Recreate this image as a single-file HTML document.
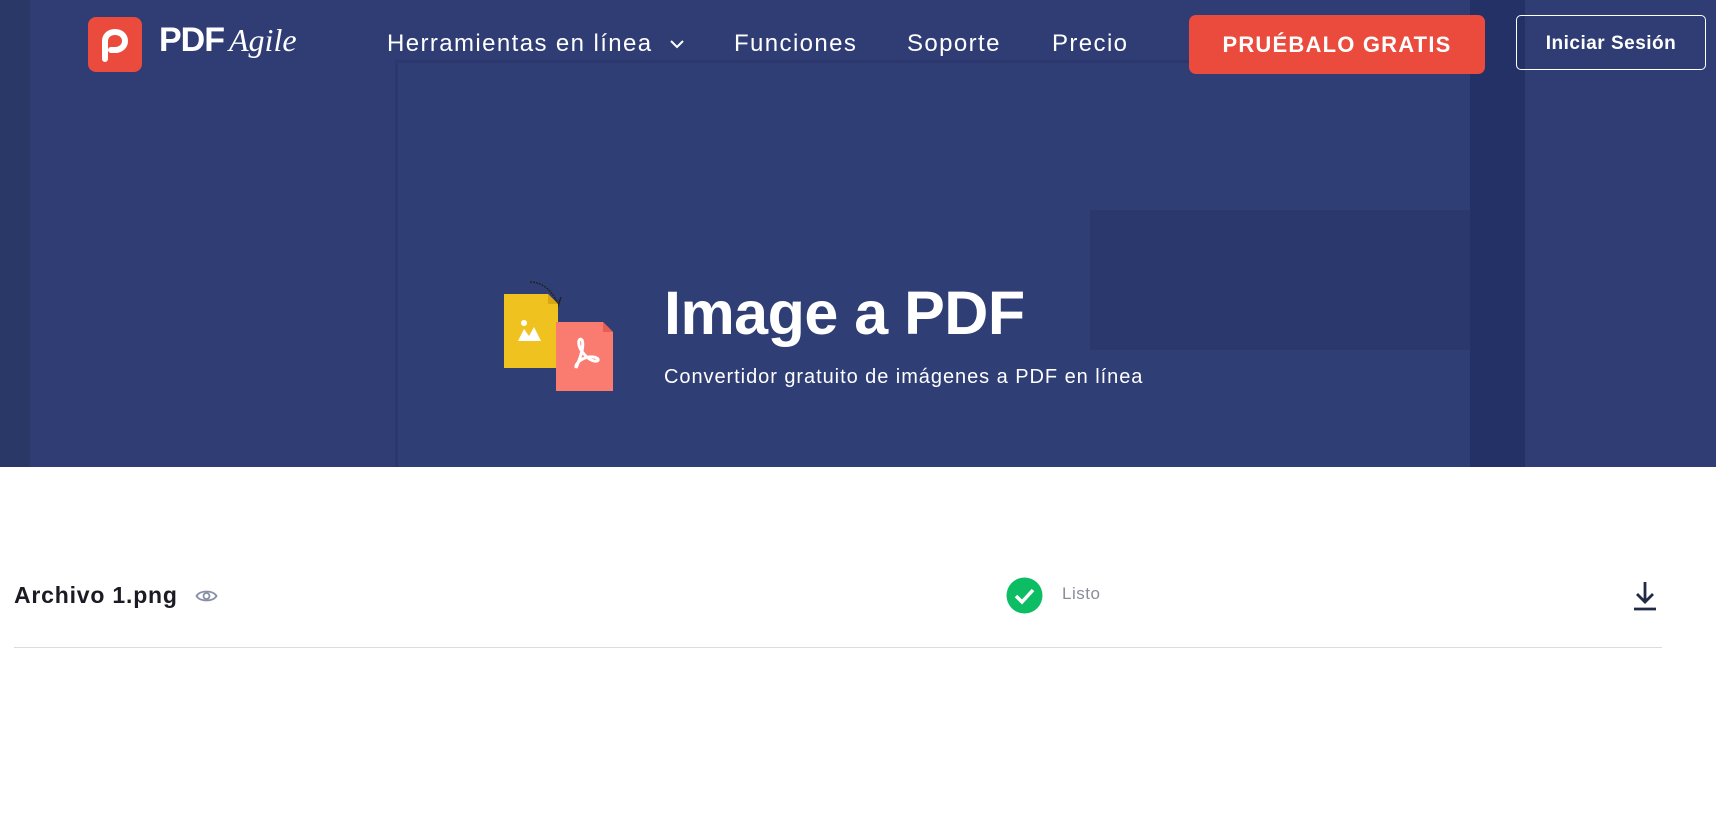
<!DOCTYPE html>
<html><head><meta charset="utf-8">
<style>
*{margin:0;padding:0;box-sizing:border-box}
body{width:1716px;height:819px;background:#fff;font-family:"Liberation Sans",sans-serif;position:relative;overflow:hidden}
.hero{position:absolute;left:0;top:0;width:1716px;height:467px;background:#2f3d74;overflow:hidden}
.abs{position:absolute}
.nav{color:#fff;font-size:24px;top:30px;letter-spacing:1.4px}
</style></head><body>
<div class="hero">
  <div class="abs" style="left:395px;top:60px;width:1130px;height:420px;border:3px solid rgba(40,52,104,.6);background:rgba(52,66,122,.35)"></div>
  <div class="abs" style="left:0;top:0;width:30px;height:467px;background:#2a3868"></div>
  <div class="abs" style="left:1470px;top:0;width:55px;height:467px;background:#243166"></div>
  <div class="abs" style="left:1090px;top:210px;width:380px;height:140px;background:rgba(36,49,100,.5)"></div>
</div>
<!-- logo -->
<div class="abs" style="left:88px;top:17px;width:54px;height:55px;background:#ea4b3c;border-radius:8px"></div>
<svg class="abs" style="left:88px;top:17px" width="54" height="55" viewBox="0 0 54 55"><path d="M17 42V24c0-5 4-9 10-9s10 4 10 9-4 9-10 9h-4" fill="none" stroke="#fff" stroke-width="6" stroke-linecap="round"/></svg>
<div class="abs" style="left:159px;top:21px;color:#fff;font-size:34px;font-weight:bold;letter-spacing:-1px">PDF</div>
<div class="abs" style="left:229px;top:22px;color:#fff;font-size:32px;font-style:italic;font-family:'Liberation Serif',serif">Agile</div>
<div class="abs nav" style="left:387px">Herramientas en línea</div>
<svg class="abs" style="left:669px;top:38px" width="16" height="12"><path d="M2 3l6 6 6-6" fill="none" stroke="#fff" stroke-width="2"/></svg>
<div class="abs nav" style="left:734px">Funciones</div>
<div class="abs nav" style="left:907px">Soporte</div>
<div class="abs nav" style="left:1052px">Precio</div>
<div class="abs" style="left:1189px;top:15px;width:296px;height:59px;background:#ea4b3c;border-radius:7px;color:#fff;font-weight:bold;font-size:22px;letter-spacing:1.2px;text-align:center;line-height:59px">PRUÉBALO GRATIS</div>
<div class="abs" style="left:1516px;top:15px;width:190px;height:55px;border:1.5px solid #fff;border-radius:5px;color:#fff;font-weight:bold;font-size:19px;letter-spacing:0.5px;text-align:center;line-height:55px">Iniciar Sesión</div>
<!-- icon -->
<svg class="abs" style="left:500px;top:276px" width="120" height="118" viewBox="0 0 120 118">
<path d="M30 6c12 0 22 8 28 22" fill="none" stroke="#222" stroke-width="1.5" stroke-dasharray="2 1"/>
<path d="M52 24l6 6 3-9" fill="none" stroke="#222" stroke-width="1.5"/>
<path d="M4 18h44l10 10v64H4z" fill="#f0c21f"/>
<path d="M48 18l10 10H48z" fill="#d9a810"/>
<path d="M18 65l6-12 5 7 5-9 7 14z" fill="#fff"/><circle cx="24" cy="47" r="3" fill="#fff"/>
<path d="M56 46h47l10 10v59H56z" fill="#fa7b70"/>
<path d="M103 46l10 10h-10z" fill="#e55f55"/>
<path d="M76 92c6-14 8-24 6-28-3-3-5 3-1 10 5 8 12 12 16 11 3-1 0-5-8-4-7 1-14 6-13 11" fill="none" stroke="#fff" stroke-width="3"/>
</svg>
<div class="abs" style="left:664px;top:278px;color:#fff;font-size:61px;font-weight:bold;letter-spacing:-0.5px">Image a PDF</div>
<div class="abs" style="left:664px;top:366px;color:#fff;font-size:20px;letter-spacing:0.95px">Convertidor gratuito de imágenes a PDF en línea</div>
<!-- row -->
<div class="abs" style="left:14px;top:582px;color:#1c1a22;font-size:23px;font-weight:bold;letter-spacing:0.8px">Archivo 1.png</div>
<svg class="abs" style="left:195px;top:588px" width="23" height="16" viewBox="0 0 23 16"><path d="M1.5 8C5 2 18 2 21.5 8 18 14 5 14 1.5 8z" fill="none" stroke="#8890a8" stroke-width="1.8"/><circle cx="11.5" cy="8" r="3" fill="none" stroke="#8890a8" stroke-width="1.8"/></svg>
<svg class="abs" style="left:1006px;top:577px" width="37" height="37" viewBox="0 0 37 37"><circle cx="18.5" cy="18.5" r="18" fill="#0cbd64"/><path d="M10 19l6 6 11-12" fill="none" stroke="#fff" stroke-width="3.5"/></svg>
<div class="abs" style="left:1062px;top:584px;color:#8a8d99;font-size:17px;letter-spacing:0.5px">Listo</div>
<svg class="abs" style="left:1630px;top:580px" width="30" height="32" viewBox="0 0 30 32"><path d="M15 2v20M7 14l8 8 8-8M4 29h22" fill="none" stroke="#1f2a44" stroke-width="2.8"/></svg>
<div class="abs" style="left:14px;top:647px;width:1648px;height:1px;background:#dcdcdc"></div>
</body></html>
